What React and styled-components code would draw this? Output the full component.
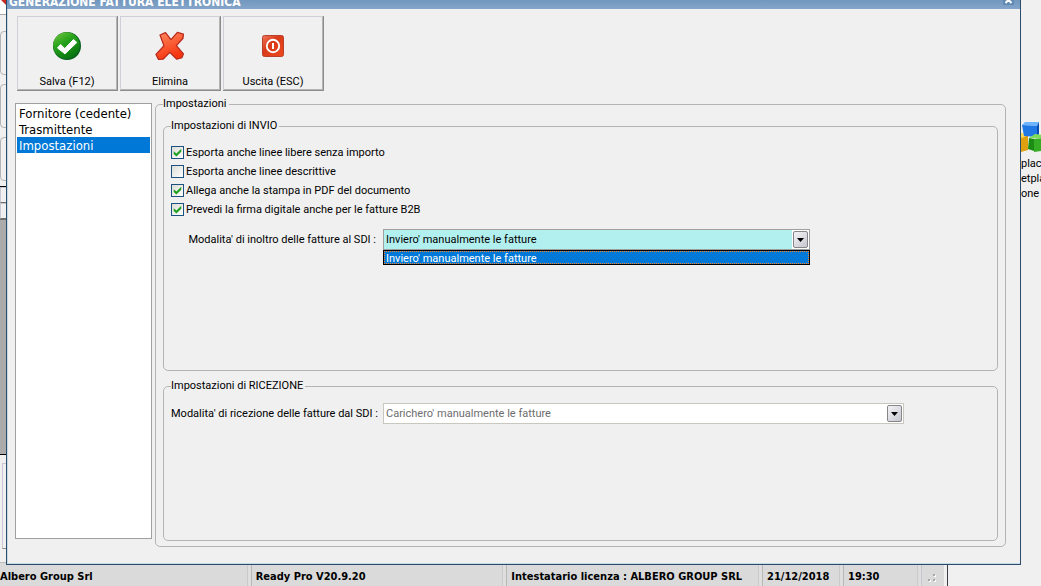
import React, { useState } from "react";
import styled, { createGlobalStyle, css } from "styled-components";

const wideFont = '"DejaVu Sans Condensed", "DejaVu Sans", sans-serif';
const textFont = 'Roboto, "Liberation Sans", sans-serif';

const GlobalStyle = createGlobalStyle`
  *, *::before, *::after { box-sizing: border-box; }
  body {
    margin: 0;
    background: #f0f0f0;
    color: #000;
    font: 11px/14px ${textFont};
  }
`;

const Desktop = styled.div`
  display: flex;
  flex-direction: column;
  min-height: 100vh;
  overflow: hidden;
`;

const Workspace = styled.div`
  display: flex;
  flex: 1;
`;

/* Slice of the main window that shows at the left of the dialog */
const BackWindow = styled.div`
  display: flex;
  flex-direction: column;
  width: 6px;
  flex: none;
  overflow: hidden;
`;

const BackHeader = styled.div`
  height: 15px;
  margin-bottom: 16px;
  flex: none;
  border-bottom: 1px solid #a8a8a8;
  background: linear-gradient(225deg, #c8281e 3px, #fff 4px);
`;

const BackGroups = styled.div`
  display: flex;
  flex-direction: column;
  flex: none;
  gap: 9px;
  padding-bottom: 5px;
`;

const BackGroup = styled.div`
  height: 44px;
  width: 12px;
  border: 1px solid #b4b4b4;
  border-radius: 4px;
`;

const BackCell = styled.div`
  height: 16px;
  flex: none;
  border-left: 1px solid #c8c8d2;
  border-top: 1px solid #c8c8d2;
  border-bottom: 1px solid #6e6e6e;
`;

const BackGrid = styled.div`
  flex: 1;
  border-top: 1px solid #6e6e6e;
  border-bottom: 1px solid #000;
  background: #ababab;
`;

const BackRule = styled.div`
  height: 1px;
  flex: none;
  background: #000;
`;

const BackButton = styled.div`
  height: 86px;
  flex: none;
  margin: 8px 0 13px 2px;
  border: 1px solid #c8c8d2;
  border-right: 0;
  border-bottom-color: #8c8c8c;
`;

const BackFooter = styled.div`
  height: 3px;
  flex: none;
  border-top: 1px solid #bcbcbc;
  background: #dadada;
`;

const Shortcut = styled.aside`
  width: 20px;
  flex: none;
  padding-top: 121px;
  overflow: hidden;
  white-space: nowrap;
  line-height: 15px;

  svg {
    display: block;
  }
`;

const ShortcutText = styled.div`
  padding-top: 3px;
`;

const Dialog = styled.main`
  display: flex;
  flex-direction: column;
  flex: 1;
  min-width: 0;
  border: 1px solid #2b4d6b;
  border-top: 0;
  box-shadow: inset 1px -1px #c9d9e4;
  background: #f0f0f0;
`;

const TitleBar = styled.header`
  display: flex;
  align-items: flex-end;
  justify-content: space-between;
  height: 9px;
  flex: none;
  padding: 0 6px 0 2px;
  overflow: hidden;
  background: linear-gradient(#7397bd, #83a5c9);
`;

const Title = styled.h1`
  margin: 0;
  color: #fff;
  font: bold 12px/14px ${wideFont};
  white-space: nowrap;
`;

const CloseButton = styled.button`
  display: flex;
  align-items: flex-end;
  width: 11px;
  height: 11px;
  flex: none;
  margin-bottom: 4px;
  padding: 1px;
  border: 0;
  background: #6288b4;
`;

const Toolbar = styled.div`
  display: flex;
  gap: 2px;
  flex: none;
  padding: 7px 10px 6px;
`;

const ToolButton = styled.button`
  display: flex;
  flex-direction: column;
  align-items: center;
  justify-content: space-between;
  width: 101px;
  height: 75px;
  padding: 15px 0 1px;
  border: 0;
  border-right: 1px solid #8c8c8c;
  border-bottom: 1px solid #8c8c8c;
  background: #f0f0f0;
  box-shadow: inset 1px 1px #cfcfd9, inset -1px -1px #b4b4b4;
  color: #000;
  font: 11px/14px ${textFont};
`;

const Body = styled.div`
  display: flex;
  flex: 1;
  gap: 3px;
  padding: 0 14px 17px 8px;
`;

const SectionList = styled.ul`
  width: 137px;
  flex: none;
  margin: 6px 0 8px;
  padding: 1px;
  border: 1px solid #a0a0a0;
  background: #fff;
  list-style: none;
`;

const SectionItem = styled.button`
  display: block;
  width: 100%;
  padding: 2px 2px 0;
  border: 0;
  background: ${(p) => (p.$selected ? "#0078d7" : "transparent")};
  color: ${(p) => (p.$selected ? "#fff" : "#000")};
  font: 13px/14px ${wideFont};
  text-align: left;
  white-space: nowrap;
`;

const groupFrame = css`
  display: flex;
  flex-direction: column;
  min-width: 0;
  margin: 0;
  border: 1px solid #b4b4b4;
  border-radius: 5px;
`;

const Panel = styled.fieldset`
  ${groupFrame}
  flex: 1;
  gap: 8px;
  padding: 8px 7px 5px;
`;

const Group = styled.fieldset`
  ${groupFrame}
  flex: ${(p) => p.$share} 0 0;
  padding: 10px 7px;
`;

const Legend = styled.legend`
  padding: 0 2px 0 0;
`;

const CheckRow = styled.label`
  display: flex;
  align-items: center;
  gap: 2px;
  height: 19px;
  line-height: 16px;
`;

const CheckBox = styled.input.attrs({ type: "checkbox" })`
  appearance: none;
  display: grid;
  place-items: center;
  width: 13px;
  height: 13px;
  margin: 0;
  border: 1px solid #1c5180;
  background: linear-gradient(135deg, #dcdcd7, #fff);

  &:checked::after {
    content: "";
    width: 9px;
    height: 9px;
    background: #21a121;
    clip-path: polygon(8% 35%, 38% 60%, 92% 8%, 92% 42%, 38% 95%, 8% 68%);
  }
`;

const Field = styled.div`
  display: flex;
  align-items: center;
  gap: 7px;
  margin-top: ${(p) => (p.$spaced ? "10px" : "0")};
`;

const FieldLabel = styled.label`
  width: 205px;
  flex: none;
  line-height: 16px;
  text-align: right;
  white-space: nowrap;
`;

const Combo = styled.div`
  position: relative;
  flex: 0 1 ${(p) => p.$width}px;
`;

const Select = styled.select`
  appearance: none;
  display: block;
  width: 100%;
  height: 21px;
  padding: 1px 20px 0 2px;
  border: 1px solid ${(p) => (p.disabled ? "#c8c8be" : "#a0a0a0")};
  border-radius: 0;
  background: ${(p) => (p.disabled ? "#fff" : "#b2f0ef")};
  color: ${(p) => (p.disabled ? "#6d6d6d" : "#000")};
  font: 11px/18px ${textFont};
  opacity: 1;
  outline: 0;
`;

const ComboArrow = styled.span`
  position: absolute;
  top: 1px;
  right: 1px;
  bottom: 1px;
  display: grid;
  place-items: center;
  width: 17px;
  background: #fff;
  pointer-events: none;

  svg {
    width: 15px;
    height: 17px;
    border: 1px solid #85858a;
    border-radius: 2px;
    background: linear-gradient(135deg, #f4f4f6, #c6c6d0);
  }
`;

const OptionList = styled.ul`
  position: absolute;
  top: 100%;
  left: 0;
  right: 0;
  margin: 0;
  padding: 0;
  border: 1px solid #000;
  list-style: none;
`;

const Option = styled.li`
  height: 13px;
  padding: 0 1px;
  border: 1px dotted #ff8728;
  background: #0078d7;
  color: #fff;
  line-height: 13px;
`;

const StatusRow = styled.footer`
  display: flex;
  flex: none;
  padding-right: 93px;
`;

const StatusBar = styled.div`
  display: grid;
  grid-template-columns: 251fr 256fr 256fr 81px 78px 26px;
  flex: 1;
  border-right: 1px solid #3c3c46;
  background: #dadada;
  font: bold 11px/19px ${wideFont};
`;

const StatusCell = styled.div`
  padding: 2px 0 0 ${(p) => (p.$first ? "0" : "4px")};
  border-left: ${(p) => (p.$first ? "0" : "1px solid #b8b8b8")};
  box-shadow: inset -3px 0 #dedede, inset -4px 0 #cacaca;
  white-space: nowrap;
`;

const GripCell = styled.div`
  padding: 9px 0 0 6px;
  border-left: 1px solid #c6c6ce;
  border-right: 3px solid #f0f0f0;
  line-height: 0;
`;

const SaveIcon = () => (
  <svg width="30" height="30" viewBox="0 0 30 30" aria-hidden="true">
    <defs>
      <linearGradient id="save" x1="0" y1="0" x2="0.6" y2="1">
        <stop offset="0" stopColor="#7bc843" />
        <stop offset="0.45" stopColor="#27a31c" />
        <stop offset="1" stopColor="#087410" />
      </linearGradient>
    </defs>
    <circle cx="15" cy="15" r="14" fill="#075c20" />
    <circle cx="14.5" cy="14.5" r="13.3" fill="url(#save)" />
    <path d="M5.500 17 8.500 13.500 12.800 17.500 21.500 8.500 24.800 11.500 13 22.800Z" fill="#fff" stroke="#fff" strokeLinejoin="round" />
  </svg>
);

const DeleteIcon = () => (
  <svg width="30" height="30" viewBox="0 0 30 30" aria-hidden="true">
    <defs>
      <linearGradient id="del" x1="0" y1="0" x2="0.4" y2="1">
        <stop offset="0" stopColor="#ff8d62" />
        <stop offset="1" stopColor="#f53410" />
      </linearGradient>
    </defs>
    <path
      d="M5 4 10.500 1.600 16 8.600 22.400 1.400 28.400 3.200 28 7.200 21.400 14.600 28.400 22.800 27 26.600 21.800 28.200 14.800 21.400 8 28.200 3.500 28.400 1 23.400 9 14.800Z"
      fill="url(#del)"
      stroke="#b82a1c"
      strokeWidth="1.3"
      strokeLinejoin="round"
    />
  </svg>
);

const ExitIcon = () => (
  <svg width="30" height="30" viewBox="0 0 30 30" aria-hidden="true">
    <defs>
      <linearGradient id="exit" x1="0" y1="0" x2="1" y2="1">
        <stop offset="0" stopColor="#f0785c" />
        <stop offset="0.4" stopColor="#d93a18" />
        <stop offset="1" stopColor="#ee4a1e" />
      </linearGradient>
    </defs>
    <rect x="4.500" y="4.500" width="21" height="21" rx="2" fill="url(#exit)" stroke="#b8402c" />
    <circle cx="15" cy="15" r="6.200" fill="none" stroke="#fff" strokeWidth="1.9" />
    <path d="M15 12v6" stroke="#fff" strokeWidth="2" />
  </svg>
);

const CubesIcon = () => (
  <svg width="34" height="32" viewBox="0 0 34 32" aria-hidden="true">
    <path d="M-6 14 0 12 7 14V29L0 31Z" fill="#e0a010" />
    <path d="M-6 14 0 12 7 14 1 17Z" fill="#ffd95a" />
    <path d="M1 4 4 1H18L16 5Z" fill="#6cb4ff" />
    <path d="M1 4 16 5V16L3 15Z" fill="#1f78e4" />
    <path d="M16 5 18 1V13L16 16Z" fill="#0a4cae" />
    <path d="M8 17 14 13 28 15 22 18Z" fill="#7fdc5a" />
    <path d="M8 17 13 18V30L7 28Z" fill="#1c8c14" />
    <path d="M13 18 28 17V29L13 31Z" fill="#35ad25" />
  </svg>
);

const DownArrow = () => (
  <ComboArrow aria-hidden="true">
    <svg viewBox="0 0 13 15">
      <path d="M3 6H10L6.500 10Z" fill="#000" />
    </svg>
  </ComboArrow>
);

const tools = [
  { label: "Salva (F12)", Icon: SaveIcon },
  { label: "Elimina", Icon: DeleteIcon },
  { label: "Uscita (ESC)", Icon: ExitIcon },
];

const sections = ["Fornitore (cedente)", "Trasmittente", "Impostazioni"];

const exportOptions = [
  { label: "Esporta anche linee libere senza importo", on: true },
  { label: "Esporta anche linee descrittive", on: false },
  { label: "Allega anche la stampa in PDF del documento", on: true },
  { label: "Prevedi la firma digitale anche per le fatture B2B", on: true },
];

export default function App() {
  const [section, setSection] = useState("Impostazioni");

  return (
    <Desktop>
      <GlobalStyle />
      <Workspace>
        <BackWindow aria-hidden="true">
          <BackHeader />
          <BackGroups>
            <BackGroup />
            <BackGroup />
            <BackGroup />
          </BackGroups>
          <BackRule />
          <BackCell />
          <BackCell />
          <BackGrid />
          <BackButton />
          <BackFooter />
        </BackWindow>

        <Dialog>
          <TitleBar>
            <Title>GENERAZIONE FATTURA ELETTRONICA</Title>
            <CloseButton aria-label="Chiudi">
              <svg width="9" height="9" viewBox="0 0 9 9" aria-hidden="true">
                <path d="M1.500 1.500 7.500 8M7.500 1.500 1.500 8" stroke="#fff" strokeWidth="2" />
              </svg>
            </CloseButton>
          </TitleBar>

          <Toolbar>
            {tools.map(({ label, Icon }) => (
              <ToolButton key={label}>
                <Icon />
                {label}
              </ToolButton>
            ))}
          </Toolbar>

          <Body>
            <SectionList>
              {sections.map((name) => (
                <li key={name}>
                  <SectionItem $selected={name === section} onClick={() => setSection(name)}>
                    {name}
                  </SectionItem>
                </li>
              ))}
            </SectionList>

            <Panel>
              <Legend>Impostazioni</Legend>
              <Group $share={23}>
                <Legend>Impostazioni di INVIO</Legend>
                {exportOptions.map(({ label, on }) => (
                  <CheckRow key={label}>
                    <CheckBox defaultChecked={on} />
                    {label}
                  </CheckRow>
                ))}
                <Field $spaced>
                  <FieldLabel htmlFor="send-mode">Modalita' di inoltro delle fatture al SDI :</FieldLabel>
                  <Combo $width={427}>
                    <Select id="send-mode">
                      <option>Inviero' manualmente le fatture</option>
                    </Select>
                    <DownArrow />
                    <OptionList role="listbox">
                      <Option role="option" aria-selected="true">
                        Inviero' manualmente le fatture
                      </Option>
                    </OptionList>
                  </Combo>
                </Field>
              </Group>

              <Group $share={14}>
                <Legend>Impostazioni di RICEZIONE</Legend>
                <Field>
                  <FieldLabel htmlFor="receive-mode">Modalita' di ricezione delle fatture dal SDI :</FieldLabel>
                  <Combo $width={521}>
                    <Select id="receive-mode" disabled>
                      <option>Carichero' manualmente le fatture</option>
                    </Select>
                    <DownArrow />
                  </Combo>
                </Field>
              </Group>
            </Panel>
          </Body>
        </Dialog>

        <Shortcut>
          <CubesIcon />
          <ShortcutText>
            place
            <br />
            etpla
            <br />
            one c
          </ShortcutText>
        </Shortcut>
      </Workspace>

      <StatusRow>
        <StatusBar>
          <StatusCell $first>Albero Group Srl</StatusCell>
          <StatusCell>Ready Pro V20.9.20</StatusCell>
          <StatusCell>Intestatario licenza : ALBERO GROUP SRL</StatusCell>
          <StatusCell>21/12/2018</StatusCell>
          <StatusCell>19:30</StatusCell>
          <GripCell>
            <svg width="9" height="8" viewBox="0 0 9 8" aria-hidden="true">
              <path d="M1 6h2v2H1zM6 6h2v2H6zM6 1h2v2H6z" fill="#fff" />
              <path d="M0 5h2v2H0zM5 5h2v2H5zM5 0h2v2H5z" fill="#a8a8a8" />
            </svg>
          </GripCell>
        </StatusBar>
      </StatusRow>
    </Desktop>
  );
}
